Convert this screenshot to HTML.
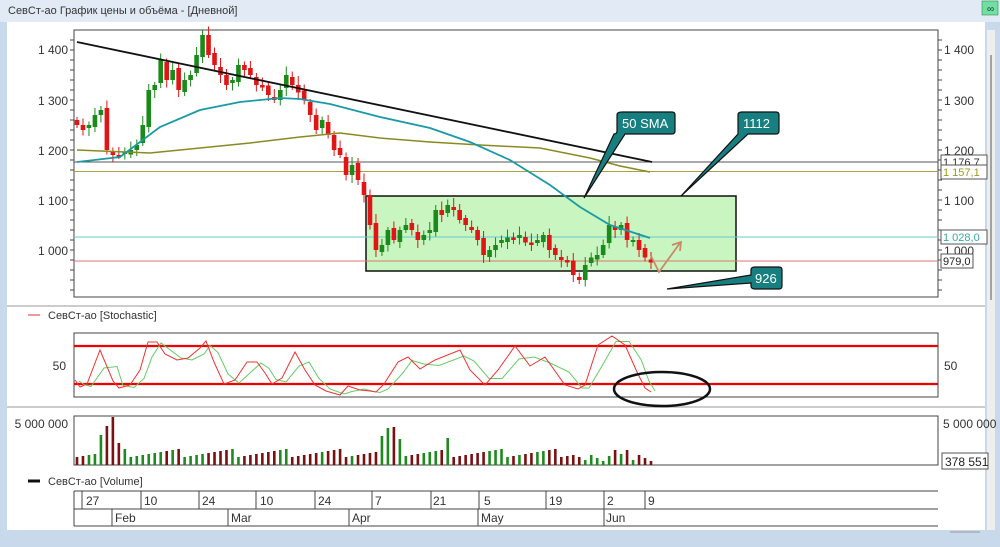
<!DOCTYPE html>
<html><head><meta charset="utf-8"><style>
body{margin:0;width:1000px;height:542px;overflow:hidden;background:#c9d9ec;font-family:"Liberation Sans","Noto Sans CJK SC",sans-serif;}
svg text{font-family:"Liberation Sans","Noto Sans CJK SC",sans-serif;}
</style></head><body>
<svg id="s" width="1000" height="542" xmlns="http://www.w3.org/2000/svg">
<rect x="0" y="0" width="1000" height="542" fill="#c9d9ec"/>
<rect x="0" y="0" width="1000" height="22" fill="#e2ebf5"/>
<rect x="982" y="1" width="16" height="14" fill="#6fe0a0" stroke="#3a8a5a" stroke-width="0.6"/>
<text x="987" y="12" font-size="10" fill="#234">∞</text>
<text x="8" y="14" font-size="11" fill="#333">СевСт-ао График цены и объёма - [Дневной]</text>
<rect x="7" y="22" width="978" height="508" fill="#fff"/>
<rect x="987" y="30" width="8" height="500" fill="#eee"/>
<line x1="991" y1="55" x2="991" y2="300" stroke="#888" stroke-width="1.5"/>
<line x1="7" y1="306" x2="985" y2="306" stroke="#ccc" stroke-width="2"/>
<line x1="7" y1="407" x2="985" y2="407" stroke="#ccc" stroke-width="2"/>
<line x1="950" y1="532" x2="980" y2="532" stroke="#999"/>
<!-- main plot -->
<rect x="74" y="30" width="864" height="267" fill="#fff" stroke="#444"/>
<rect x="366" y="196" width="370" height="75" fill="#c8f5c0" stroke="#111" stroke-width="1.5"/>
<g id="ticks"></g>
<g font-size="12" fill="#333">
<text x="68" y="54" text-anchor="end">1 400</text><text x="68" y="105" text-anchor="end">1 300</text><text x="68" y="155" text-anchor="end">1 200</text><text x="68" y="205" text-anchor="end">1 100</text><text x="68" y="255" text-anchor="end">1 000</text>
<text x="944" y="54">1 400</text><text x="944" y="105">1 300</text><text x="944" y="155">1 200</text><text x="944" y="205">1 100</text><text x="944" y="255">1 000</text>
</g>
<line x1="74" y1="162" x2="938" y2="162" stroke="#555" stroke-width="1"/>
<line x1="74" y1="171.5" x2="938" y2="171.5" stroke="#aaa040" stroke-width="1"/>
<line x1="74" y1="237" x2="938" y2="237" stroke="#6cc" stroke-width="1"/>
<line x1="74" y1="261" x2="938" y2="261" stroke="#d77" stroke-width="1"/>
<g id="candles"></g>
<polyline fill="none" stroke="#8a8a20" stroke-width="1.5" points="77,150 150,153 200,148 250,143 300,137 340,133 380,138 430,142 480,145 540,148 590,158 620,166 650,172"/>
<polyline fill="none" stroke="#1a9aa5" stroke-width="1.8" points="77,162 120,157 160,127 200,110 240,102 280,98 300,99 330,104 380,117 430,128 470,142 510,160 550,185 580,207 610,225 650,238"/>
<line x1="77" y1="42" x2="652" y2="162" stroke="#111" stroke-width="1.8"/>
<path d="M651,256 L659,272 L680,243 M672,245 L681,242 L680,251" fill="none" stroke="#c88a6a" stroke-width="1.8"/>
<g font-size="11">
<rect x="941" y="155" width="46" height="13" fill="#fff" stroke="#555"/><text x="943" y="166" fill="#333">1 176,7</text>
<rect x="941" y="165" width="46" height="14" fill="#fff" stroke="#555"/><text x="943" y="176" fill="#9a9a20">1 157,1</text>
<rect x="941" y="230" width="46" height="14" fill="#fff" stroke="#555"/><text x="943" y="241" fill="#3aa">1 028,0</text>
<rect x="941" y="254" width="32" height="14" fill="#fff" stroke="#555"/><text x="943" y="265" fill="#222">979,0</text>
</g>
<!-- callouts -->
<g fill="#177f80" stroke="#111" stroke-width="1.2">
<path d="M622,112 H672 Q675,112 675,115 V131 Q675,134 672,134 H625 L584,198 L614,134 Q617,134 617,131 V115 Q617,112 622,112Z"/>
<path d="M742,112 H776 Q779,112 779,115 V131 Q779,134 776,134 H748 L681,196 L738,134 V115 Q738,112 742,112Z"/>
<path d="M755,267 H779 Q782,267 782,270 V286 Q782,289 779,289 H755 Q751,289 751,286 V283 L667,289 L751,275 V270 Q751,267 755,267Z"/>
</g>
<g font-size="13" fill="#fff"><text x="622" y="128">50 SMA</text><text x="743" y="128">1112</text><text x="755" y="283">926</text></g>
<!-- stochastic -->
<line x1="28" y1="315" x2="40" y2="315" stroke="#d33"/>
<text x="48" y="319" font-size="11" fill="#333">СевСт-ао [Stochastic]</text>
<rect x="74" y="333" width="864" height="64" fill="#fff" stroke="#444"/>
<line x1="74" y1="346" x2="938" y2="346" stroke="#e00" stroke-width="2.2"/>
<line x1="74" y1="384" x2="938" y2="384" stroke="#e00" stroke-width="2.2"/>
<text x="66" y="370" font-size="12" fill="#333" text-anchor="end">50</text>
<text x="944" y="370" font-size="12" fill="#333">50</text>
<polyline id="gk" fill="none" stroke="#6c6" stroke-width="1"/>
<polyline id="rk" fill="none" stroke="#e33" stroke-width="1"/>
<ellipse cx="662" cy="389" rx="48" ry="17" fill="none" stroke="#111" stroke-width="2.5"/>
<!-- volume -->
<rect x="74" y="416" width="864" height="49" fill="#fff" stroke="#444"/>
<g id="vol"></g>
<text x="68" y="428" font-size="12" fill="#333" text-anchor="end">5 000 000</text>
<text x="943" y="428" font-size="12" fill="#333">5 000 000</text>
<rect x="942" y="453" width="46" height="16" fill="#fff" stroke="#555"/><text x="945" y="466" font-size="12" fill="#222">378 551</text>
<line x1="28" y1="481" x2="40" y2="481" stroke="#111" stroke-width="3"/>
<text x="48" y="485" font-size="11" fill="#333">СевСт-ао [Volume]</text>
<!-- date axis -->
<g stroke="#444" fill="none">
<path d="M74,491 H938 M74,509 H938 M74,526 H938 M74,491 V526"/>
<path d="M82,491 V509 M141,491 V509 M199,491 V509 M256,491 V509 M315,491 V509 M372,491 V509 M431,491 V509 M479,491 V509 M546,491 V509 M604,491 V509 M645,491 V509"/>
<path d="M112,509 V526 M228,509 V526 M349,509 V526 M478,509 V526 M604,509 V526"/>
</g>
<g font-size="12" fill="#333">
<text x="86" y="505">27</text><text x="144" y="505">10</text><text x="202" y="505">24</text><text x="260" y="505">10</text><text x="318" y="505">24</text><text x="375" y="505">7</text><text x="433" y="505">21</text><text x="484" y="505">5</text><text x="549" y="505">19</text><text x="607" y="505">2</text><text x="648" y="505">9</text>
<text x="115" y="522">Feb</text><text x="231" y="522">Mar</text><text x="352" y="522">Apr</text><text x="481" y="522">May</text><text x="606" y="522">Jun</text>
</g>
</svg>
<script>
var NS="http://www.w3.org/2000/svg";
function el(p,t,a){var e=document.createElementNS(NS,t);for(var k in a)e.setAttribute(k,a[k]);document.getElementById(p).appendChild(e);return e;}
// ticks
for(var y=40;y<=295;y+=10){el("ticks","line",{x1:70,x2:74,y1:y,y2:y,stroke:"#444"});el("ticks","line",{x1:938,x2:942,y1:y,y2:y,stroke:"#444"});}
var c=[1250,1240,1250,1270,1280,1200,1190,1190,1195,1200,1210,1250,1320,1330,1380,1340,1360,1320,1340,1350,1390,1430,1390,1370,1350,1330,1340,1370,1360,1350,1330,1325,1310,1300,1320,1350,1330,1315,1300,1270,1240,1260,1230,1200,1190,1150,1170,1140,1110,1050,1000,1010,1040,1020,1040,1050,1040,1020,1030,1040,1080,1070,1090,1080,1060,1050,1040,1020,990,1000,1010,1020,1025,1020,1030,1015,1010,1020,1030,1000,990,980,975,950,940,970,985,990,1010,1050,1040,1050,1020,1020,1000,985,975];
function Y(p){return 50+(1400-p)*0.5;}
var n=c.length,dx=(651-77)/(n-1);
for(var i=0;i<n;i++){var x=77+i*dx,o=i?c[i-1]+(i%3-1)*4:1260,cl=c[i],up=cl>o;
var col=up?"#1a8a1a":"#e01515";var hi=Math.max(o,cl)+6+(i*7%13),lo=Math.min(o,cl)-6-(i*5%11);
el("candles","line",{x1:x,x2:x,y1:Y(hi),y2:Y(lo),stroke:col,"stroke-width":1});
var t=Y(Math.max(o,cl)),h=Math.max(1.5,Math.abs(Y(o)-Y(cl)));
el("candles","rect",{x:x-2.3,y:t,width:4.6,height:h,fill:col});
// volume
var vh=8+(i*37%9);if(i==5)vh=39;if(i==6)vh=48;if(i==4)vh=30;if(i==7)vh=22;if(i==52)vh=37;if(i==53)vh=38;if(i==51)vh=29;if(i==54)vh=26;if(i==62)vh=27;if(i>=84)vh=4+(i*13%8);if(i==90||i==92)vh=15;if(i==91)vh=11;
el("vol","rect",{x:x-1.3,y:465-vh,width:2.6,height:vh,fill:up?"#1f8a1f":"#7a1010"});}
var k=[[75,380],[80,387],[87,384],[100,350],[113,381],[119,388],[130,385],[140,370],[148,342],[157,342],[165,354],[177,360],[188,358],[200,348],[206,341],[214,362],[224,384],[235,380],[247,362],[257,362],[265,373],[272,384],[282,378],[295,352],[305,370],[315,385],[326,391],[340,395],[348,386],[360,390],[370,391],[376,392],[384,384],[398,362],[408,357],[420,369],[435,360],[460,350],[470,370],[485,385],[498,370],[515,346],[530,366],[545,357],[565,385],[578,389],[585,385],[598,345],[612,336],[625,345],[637,372],[645,388],[651,392]];
document.getElementById("rk").setAttribute("points",k.map(function(p){return p.join(",")}).join(" "));
document.getElementById("gk").setAttribute("points",k.map(function(p,i){var a=k[Math.max(0,i-1)];return (p[0]+4)+","+((p[1]+a[1])/2+1)}).join(" "));
</script>
</body></html>
